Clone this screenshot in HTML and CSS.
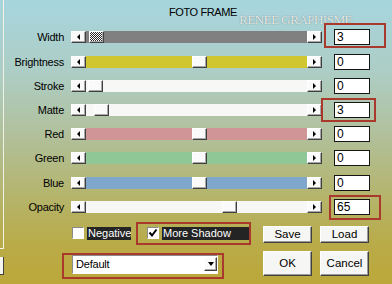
FILE: index.html
```html
<!DOCTYPE html>
<html lang="en">
<head>
    <meta charset="UTF-8">
    <title>Foto Frame</title>
    <link rel="stylesheet" href="styles.css">
</head>
<body>
    <div class="dialog">
        <div class="edge">
            <div class="edge-group"></div>
            <div class="edge-button"></div>
        </div>

        <div class="main">
            <div class="title">
                <span class="title-text">FOTO FRAME</span>
                <span class="watermark">RENEE GRAPHISME</span>
            </div>

            <div class="rows">
                <div class="row">
                    <span class="label">Width</span>
                    <div class="slider">
                        <span class="arrow arrow-left"></span>
                        <span class="track track-gray"><span class="thumb thumb-dither" style="margin-left:3px"></span></span>
                        <span class="arrow arrow-right"></span>
                    </div>
                    <span class="value"><input class="field" type="text" value="3"><span class="mark mark-width"></span></span>
                </div>

                <div class="row">
                    <span class="label">Brightness</span>
                    <div class="slider">
                        <span class="arrow arrow-left"></span>
                        <span class="track track-yellow"><span class="thumb" style="margin-left:106px"></span></span>
                        <span class="arrow arrow-right"></span>
                    </div>
                    <span class="value"><input class="field" type="text" value="0"></span>
                </div>

                <div class="row">
                    <span class="label">Stroke</span>
                    <div class="slider">
                        <span class="arrow arrow-left"></span>
                        <span class="track track-white"><span class="thumb" style="margin-left:2px"></span></span>
                        <span class="arrow arrow-right"></span>
                    </div>
                    <span class="value"><input class="field" type="text" value="0"></span>
                </div>

                <div class="row">
                    <span class="label">Matte</span>
                    <div class="slider">
                        <span class="arrow arrow-left"></span>
                        <span class="track track-white"><span class="thumb" style="margin-left:8px"></span></span>
                        <span class="arrow arrow-right"></span>
                    </div>
                    <span class="value"><input class="field" type="text" value="3"><span class="mark mark-matte"></span></span>
                </div>

                <div class="row">
                    <span class="label">Red</span>
                    <div class="slider">
                        <span class="arrow arrow-left"></span>
                        <span class="track track-red"><span class="thumb" style="margin-left:106px"></span></span>
                        <span class="arrow arrow-right"></span>
                    </div>
                    <span class="value"><input class="field" type="text" value="0"></span>
                </div>

                <div class="row">
                    <span class="label">Green</span>
                    <div class="slider">
                        <span class="arrow arrow-left"></span>
                        <span class="track track-green"><span class="thumb" style="margin-left:106px"></span></span>
                        <span class="arrow arrow-right"></span>
                    </div>
                    <span class="value"><input class="field" type="text" value="0"></span>
                </div>

                <div class="row">
                    <span class="label">Blue</span>
                    <div class="slider">
                        <span class="arrow arrow-left"></span>
                        <span class="track track-blue"><span class="thumb" style="margin-left:106px"></span></span>
                        <span class="arrow arrow-right"></span>
                    </div>
                    <span class="value"><input class="field" type="text" value="0"></span>
                </div>

                <div class="row">
                    <span class="label">Opacity</span>
                    <div class="slider">
                        <span class="arrow arrow-left"></span>
                        <span class="track track-white"><span class="thumb" style="margin-left:136px"></span></span>
                        <span class="arrow arrow-right"></span>
                    </div>
                    <span class="value"><input class="field" type="text" value="65"><span class="mark mark-opacity"></span></span>
                </div>
            </div>

            <div class="bottom">
                <div class="options">
                    <span class="check"></span>
                    <span class="check-label">Negative</span>
                    <span class="shadow-box">
                        <span class="check">
                            <svg width="10" height="10" viewBox="0 0 10 10"><polyline points="1.5,4.5 4,7.5 8.5,1.5" fill="none" stroke="#000" stroke-width="2"/></svg>
                        </span>
                        <span class="check-label wide">More Shadow</span>
                    </span>
                </div>
                <button class="btn btn-small">Save</button>
                <button class="btn btn-small">Load</button>

                <div class="preset">
                    <span class="preset-box">
                        <span class="select">
                            <span class="select-text">Default</span>
                            <span class="select-arrow"></span>
                        </span>
                    </span>
                </div>
                <button class="btn btn-tall">OK</button>
                <button class="btn btn-tall">Cancel</button>
            </div>
        </div>
    </div>
</body>
</html>
```

FILE: styles.css
```css
body {
    margin: 0;
    font-family: "Liberation Sans", Arial, sans-serif;
    font-size: 11px;
    color: #000;
}

.dialog {
    width: 392px;
    height: 284px;
    display: grid;
    grid-template-columns: 4px 388px;
    overflow: hidden;
    background: linear-gradient(180deg, #a7d5de 0%, #adcdc4 26%, #b1c09a 48%, #b4b56e 68%, #b9ab48 86%, #bca83a 100%);
}

/* cut-off controls at the left edge */
.edge-group {
    height: 249px;
    box-sizing: border-box;
    border-right: 1px solid #f0f2e6;
    border-bottom: 1px solid #f0f2e6;
}

.edge-button {
    margin-top: 8px;
    height: 18px;
    box-sizing: border-box;
    background: #f4f4f0;
    border-right: 1px solid #404040;
    border-bottom: 1px solid #404040;
}

.title {
    height: 25.4px;
    box-sizing: border-box;
    display: flex;
    align-items: flex-start;
    padding-left: 165px;
}

.title-text {
    margin-top: 6px;
    line-height: 12px;
    letter-spacing: -0.4px;
}

.watermark {
    margin-left: 2px;
    margin-top: 13px;
    font-family: "Liberation Serif", "Times New Roman", serif;
    font-size: 13.5px;
    line-height: 13px;
    letter-spacing: -0.8px;
    color: rgba(250, 252, 252, 0.85);
    text-shadow: 0 0 1px rgba(60, 70, 70, 0.7);
    white-space: nowrap;
}

.rows {
    display: grid;
    grid-auto-rows: 24.2px;
}

.row {
    display: flex;
    align-items: center;
}

.label {
    width: 60px;
    text-align: right;
    letter-spacing: -0.25px;
}

.slider {
    margin-left: 7px;
    width: 251px;
    height: 12px;
    display: flex;
}

.arrow,
.thumb,
.select-arrow {
    box-sizing: border-box;
    background: #fafafa;
    border: 1px solid;
    border-color: #fff #404040 #404040 #fff;
    box-shadow: inset -1px -1px #a8a8a8;
    display: flex;
    align-items: center;
    justify-content: center;
}

.arrow {
    width: 15px;
    height: 12px;
}

.arrow::before {
    content: "";
    border-top: 3px solid transparent;
    border-bottom: 3px solid transparent;
}

.arrow-left::before {
    border-right: 3px solid #000;
}

.arrow-right::before {
    border-left: 3px solid #000;
}

.track {
    flex: 1;
    display: flex;
}

.track-gray {
    background: #808080;
}

.track-yellow {
    background: #d0c62f;
}

.track-white {
    background: #f7f7f5;
}

.track-red {
    background: #cf9597;
}

.track-green {
    background: #8fc796;
}

.track-blue {
    background: #7ea7cb;
}

.thumb {
    width: 15px;
    height: 12px;
}

.thumb-dither {
    background: repeating-conic-gradient(#2a2a2a 0 25%, #fff 0 50%) 0 0 / 2px 2px;
}

.value {
    position: relative;
    margin-left: 12px;
    width: 36px;
    height: 16px;
}

.field {
    display: block;
    width: 36px;
    height: 16px;
    margin: 0;
    padding: 0 0 0 2px;
    box-sizing: border-box;
    border: 1px solid #151515;
    background: #fff;
    font-family: "Liberation Sans", Arial, sans-serif;
    font-size: 12px;
    color: #000;
}

/* red annotation boxes */
.mark {
    position: absolute;
    border: 2px solid #a8392c;
}

.mark-width {
    left: -10px;
    right: -16px;
    top: -6px;
    bottom: -3px;
}

.mark-matte {
    left: -13px;
    right: -6px;
    top: -4px;
    bottom: -4px;
}

.mark-opacity {
    left: -5px;
    right: -11px;
    top: -4px;
    bottom: -5px;
}

.bottom {
    display: grid;
    grid-template-columns: 251px 49px 49px;
    grid-template-rows: 29px 36px;
    column-gap: 8px;
    align-items: start;
}

.options {
    display: flex;
    align-items: center;
    margin-top: 3px;
    padding-left: 68px;
    height: 23px;
}

.check {
    width: 12px;
    height: 12px;
    box-sizing: border-box;
    background: #fff;
    border: 1px solid;
    border-color: #8a8a8a #fff #fff #8a8a8a;
    display: flex;
    align-items: center;
    justify-content: center;
}

.check-label {
    margin-left: 3px;
    width: 44px;
    height: 13px;
    line-height: 13px;
    padding-left: 1px;
    box-sizing: border-box;
    background: #242424;
    color: #fff;
    white-space: nowrap;
}

.check-label.wide {
    width: 87px;
}

.shadow-box {
    margin-left: 5px;
    width: 115px;
    height: 23px;
    box-sizing: border-box;
    border: 2px solid #a8392c;
    padding-left: 9px;
    display: flex;
    align-items: center;
}

.btn {
    padding: 0;
    box-sizing: border-box;
    background: #f6f6f4;
    border: 1px solid;
    border-color: #fff #404040 #404040 #fff;
    box-shadow: inset -1px -1px #9a9a9a;
    font-family: "Liberation Sans", Arial, sans-serif;
    font-size: 11.5px;
    color: #000;
}

.btn-small {
    margin-top: 7px;
    height: 17px;
}

.btn-tall {
    margin-top: 3px;
    height: 25px;
}

.preset {
    margin-top: 5px;
    padding-left: 58px;
}

.preset-box {
    display: flex;
    width: 162px;
    height: 26px;
    box-sizing: border-box;
    border: 2px solid #a8392c;
    padding-left: 8px;
}

.select {
    width: 146px;
    height: 19px;
    box-sizing: border-box;
    background: #fff;
    border: 1px solid;
    border-color: #8a8a8a #fff #fff #8a8a8a;
    padding-left: 3px;
    display: flex;
    align-items: center;
    justify-content: space-between;
}

.select-text {
    letter-spacing: -0.2px;
}

.select-arrow {
    width: 13px;
    height: 14px;
}

.select-arrow::before {
    content: "";
    border-top: 4px solid #000;
    border-left: 3.5px solid transparent;
    border-right: 3.5px solid transparent;
}
```
